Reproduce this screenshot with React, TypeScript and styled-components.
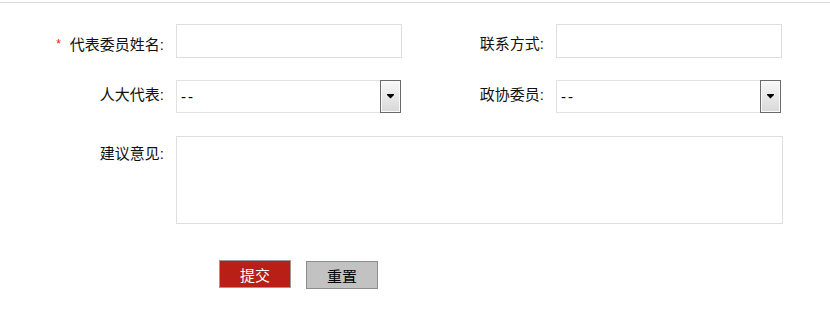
import React from 'react';
import styled, { createGlobalStyle } from 'styled-components';

const GlobalStyle = createGlobalStyle`
  body {
    margin: 0;
    background: #fff;
    color: #111;
    font-family: "Liberation Sans", "Noto Sans CJK SC", sans-serif;
  }
`;

const Page = styled.div`
  margin-top: 2px;
  border-top: 1px solid #dcdcdc;
  padding-top: 21px;
`;

const FormGrid = styled.div`
  display: grid;
  grid-template-columns: 164px 226px 130px 226px;
  column-gap: 12px;
  row-gap: 22px;
  align-items: start;
`;

const Label = styled.label<{ $top: number }>`
  display: block;
  text-align: right;
  font-size: 15px;
  line-height: 20px;
  padding-top: ${p => p.$top}px;
  white-space: nowrap;
`;

const Required = styled.span`
  color: #e4140d;
  font-size: 12px;
  margin-right: 9px;
  vertical-align: 2px;
`;

const TextInput = styled.input`
  box-sizing: border-box;
  width: 226px;
  height: 34px;
  border: 1px solid #dedede;
  outline: none;
  padding: 0 5px;
  font-size: 15px;
`;

const SelectBox = styled.div`
  box-sizing: border-box;
  display: flex;
  width: 225px;
  height: 33px;
  border: 1px solid #e2e2e2;
  border-right: none;
`;

const Select = styled.select`
  flex: 1;
  appearance: none;
  border: none;
  outline: none;
  background: transparent;
  padding: 0 4px;
  font-family: inherit;
  font-size: 15px;
  letter-spacing: 2px;
  color: #000;
`;

const ArrowButton = styled.span`
  box-sizing: border-box;
  width: 21px;
  margin: -1px 0;
  border: 1px solid #6a6a6a;
  box-shadow: inset 0 0 0 1px #fafafa;
  background: linear-gradient(#f8f8f8, #d8d8d8);
  display: flex;
  align-items: center;
  justify-content: center;
  pointer-events: none;
`;

const TextArea = styled.textarea`
  grid-column: 2 / 5;
  box-sizing: border-box;
  width: 607px;
  height: 88px;
  margin-top: 1px;
  border: 1px solid #dedede;
  outline: none;
  resize: none;
  font-family: inherit;
  font-size: 15px;
`;

const ButtonRow = styled.div`
  display: flex;
  align-items: flex-start;
  gap: 15px;
  padding-left: 219px;
  margin-top: 36px;
`;

const Button = styled.button<{ $primary?: boolean }>`
  box-sizing: border-box;
  width: 72px;
  height: 28px;
  margin-top: ${p => (p.$primary ? 0 : 1)}px;
  padding: 0;
  border: 1px solid ${p => (p.$primary ? '#9a9a9a' : '#8c8c8c')};
  background: ${p => (p.$primary ? '#b71f17' : '#c2c2c2')};
  color: ${p => (p.$primary ? '#fff' : '#000')};
  font-family: inherit;
  font-size: 15px;
  cursor: pointer;
`;

const Arrow = () => (
  <svg width="7" height="5" viewBox="0 0 7 5">
    <polygon points="0,0 7,0 7,1 3.5,4.5 0,1" fill="#000" />
  </svg>
);

const Dropdown: React.FC = () => (
  <SelectBox>
    <Select defaultValue="">
      <option value="">--</option>
    </Select>
    <ArrowButton>
      <Arrow />
    </ArrowButton>
  </SelectBox>
);

const App: React.FC = () => (
  <Page>
    <GlobalStyle />
    <FormGrid>
      <Label $top={10}>
        <Required>*</Required>代表委员姓名:
      </Label>
      <TextInput />
      <Label $top={10}>联系方式:</Label>
      <TextInput />

      <Label $top={5}>人大代表:</Label>
      <Dropdown />
      <Label $top={5}>政协委员:</Label>
      <Dropdown />

      <Label $top={9}>建议意见:</Label>
      <TextArea />
    </FormGrid>
    <ButtonRow>
      <Button $primary>提交</Button>
      <Button>重置</Button>
    </ButtonRow>
  </Page>
);

export default App;
